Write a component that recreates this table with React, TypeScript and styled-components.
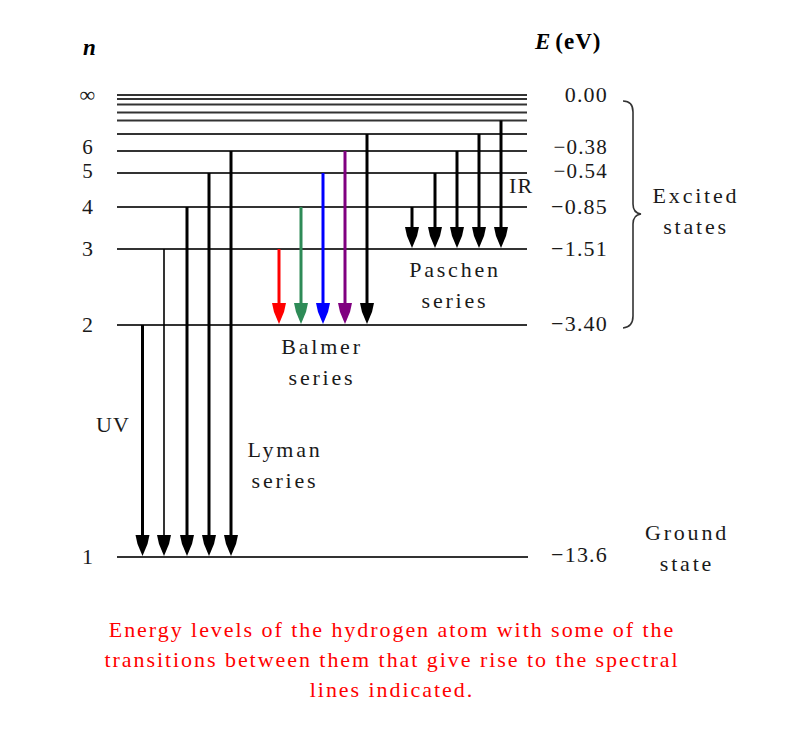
import * as React from 'react';
import styled, { createGlobalStyle } from 'styled-components';

const GlobalStyle = createGlobalStyle`
  html, body {
    margin: 0;
    padding: 0;
    background: #ffffff;
  }
  body {
    font-family: "Liberation Serif", "Times New Roman", serif;
    color: #111;
  }
`;

const Page = styled.div`
  display: flex;
  flex-direction: column;
  width: 797px;
  height: 744px;
  background: #fff;
  overflow: hidden;
`;

// the diagram is a free canvas: levels, arrows and their labels sit at
// the energies they stand for
const Figure = styled.div`
  position: relative;
  flex: none;
  width: 797px;
  height: 615px;
`;

const Canvas = styled.svg`
  position: absolute;
  inset: 0;
`;

type Align = 'left' | 'center' | 'right';

const shift: Record<Align, string> = {
  left: '0',
  center: '-50%',
  right: '-100%',
};

const Label = styled.span<{ $x: number; $y: number; $align?: Align }>`
  position: absolute;
  left: ${(p) => p.$x}px;
  top: ${(p) => p.$y}px;
  transform: translate(${(p) => shift[p.$align ?? 'left']}, -50%);
  font-size: 22px;
  line-height: 18px;
  letter-spacing: 1.2px;
  white-space: nowrap;
  text-align: ${(p) => p.$align ?? 'left'};
  color: #1a1a1a;
`;

// two levels close together share one label block
const Stack = styled(Label)`
  font-size: 21px;
  line-height: 24px;
`;

const Heading = styled(Label)`
  font-size: 23px;
  font-weight: bold;
  letter-spacing: 1px;
  color: #000;
`;

const Ital = styled.i<{ $gap?: number }>`
  font-style: italic;
  margin-right: ${(p) => p.$gap ?? 0}px;
`;

const Note = styled.span<{ $x: number; $y: number }>`
  position: absolute;
  left: ${(p) => p.$x}px;
  top: ${(p) => p.$y}px;
  transform: translateX(-50%);
  font-size: 22px;
  line-height: 31px;
  letter-spacing: 2.8px;
  text-align: center;
  white-space: nowrap;
  color: #1a1a1a;
`;

const Caption = styled.p`
  margin: 0;
  padding-right: 13px;
  font-size: 22px;
  line-height: 30px;
  letter-spacing: 1.95px;
  text-align: center;
  color: #ff0000;
`;

const LEFT = 117;
const RIGHT = 527;

const levels = [95, 99, 104.5, 112.5, 120.5, 134, 151, 173, 207, 249, 325];
const GROUND = 557;

interface ArrowProps {
  x: number;
  from: number;
  to: number;
  color?: string;
  thin?: boolean;
}

function Arrow({ x, from, to, color = '#000', thin }: ArrowProps) {
  const tip = to - 1;
  const t = tip - 21;
  const head = [
    [x - 7, t],
    [x + 7, t],
    [x + 5, t + 9],
    [x, tip],
    [x - 5, t + 9],
  ]
    .map((p) => p.join(','))
    .join(' ');
  return (
    <g>
      <line x1={x} y1={from} x2={x} y2={t + 2} stroke={color} strokeWidth={thin ? 1.6 : 3} />
      <polygon points={head} fill={color} />
    </g>
  );
}

const lyman: ArrowProps[] = [
  { x: 142.5, from: 325, to: GROUND },
  { x: 164, from: 249, to: GROUND, thin: true },
  { x: 187, from: 207, to: GROUND },
  { x: 209, from: 173, to: GROUND },
  { x: 231, from: 151, to: GROUND },
];

const balmer: ArrowProps[] = [
  { x: 279, from: 249, to: 325, color: '#ff0000' },
  { x: 301, from: 207, to: 325, color: '#2e8b57' },
  { x: 323, from: 173, to: 325, color: '#0000ff' },
  { x: 345, from: 151, to: 325, color: '#800080' },
  { x: 367, from: 134, to: 325 },
];

const paschen: ArrowProps[] = [
  { x: 412, from: 207, to: 249 },
  { x: 435, from: 173, to: 249 },
  { x: 457, from: 151, to: 249 },
  { x: 479, from: 134, to: 249 },
  { x: 501, from: 120.5, to: 249 },
];

const quantum = [
  { n: '∞', y: 95 },
  { n: '4', y: 207 },
  { n: '3', y: 249 },
  { n: '2', y: 325 },
  { n: '1', y: 557 },
];

const energies = [
  { e: '0.00', y: 95 },
  { e: '−0.85', y: 207 },
  { e: '−1.51', y: 249 },
  { e: '−3.40', y: 324 },
  { e: '−13.6', y: 555 },
];

export default function App() {
  return (
    <Page>
      <GlobalStyle />
      <Figure>
        <Canvas width={797} height={615} viewBox="0 0 797 615">
          {levels.map((y) => (
            <line key={y} x1={LEFT} y1={y} x2={RIGHT} y2={y} stroke="#333" strokeWidth={2} />
          ))}
          <line x1={LEFT} y1={GROUND} x2={RIGHT + 1} y2={GROUND} stroke="#333" strokeWidth={2} />
          {[...lyman, ...balmer, ...paschen].map((a) => (
            <Arrow key={`${a.x}-${a.from}`} {...a} />
          ))}
          <path
            d="M 623 101 Q 633 101 633 112 L 633 204 Q 633 213 641 214 Q 633 215 633 224 L 633 316 Q 633 327 623 328"
            fill="none"
            stroke="#333"
            strokeWidth={1.6}
          />
        </Canvas>

        <Heading $x={83} $y={48}>
          <Ital>n</Ital>
        </Heading>
        <Heading $x={535} $y={42}>
          <Ital $gap={4}>E</Ital>(eV)
        </Heading>

        {quantum.map((q) => (
          <Label key={q.n} $x={88} $y={q.y} $align="center">
            {q.n}
          </Label>
        ))}
        <Stack $x={88} $y={159} $align="center">
          6
          <br />5
        </Stack>

        {energies.map((item) => (
          <Label key={item.e} $x={608} $y={item.y} $align="right">
            {item.e}
          </Label>
        ))}
        <Stack $x={608} $y={159} $align="right">
          −0.38
          <br />
          −0.54
        </Stack>

        <Label $x={509} $y={186}>IR</Label>
        <Label $x={96} $y={425}>UV</Label>

        <Note $x={696} $y={180}>
          Excited
          <br />
          states
        </Note>
        <Note $x={455} $y={254}>
          Paschen
          <br />
          series
        </Note>
        <Note $x={322} $y={331}>
          Balmer
          <br />
          series
        </Note>
        <Note $x={285} $y={434}>
          Lyman
          <br />
          series
        </Note>
        <Note $x={687} $y={517}>
          Ground
          <br />
          state
        </Note>
      </Figure>
      <Caption>
        Energy levels of the hydrogen atom with some of the
        <br />
        transitions between them that give rise to the spectral
        <br />
        lines indicated.
      </Caption>
    </Page>
  );
}
